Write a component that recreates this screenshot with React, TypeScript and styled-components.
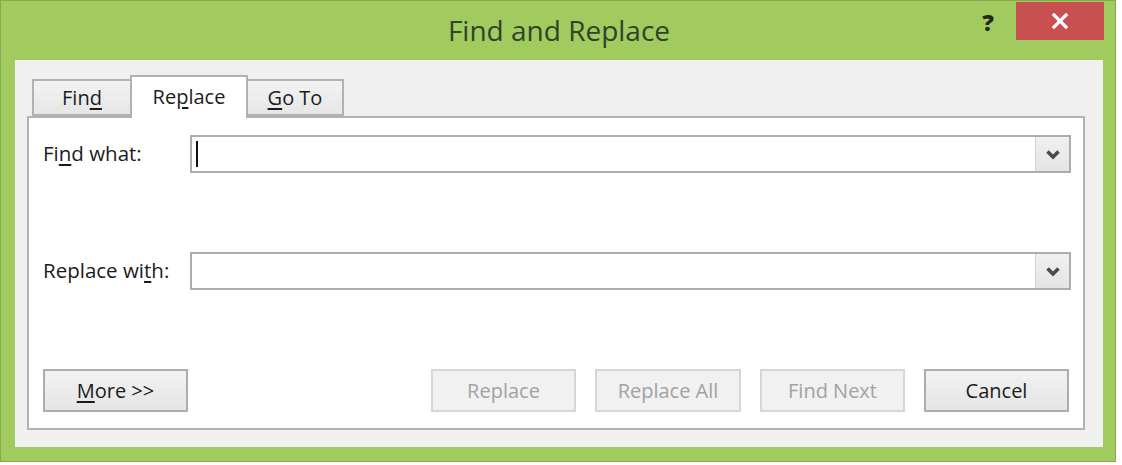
import React from 'react';
import styled, { createGlobalStyle } from 'styled-components';

const GlobalStyle = createGlobalStyle`
  html, body {
    margin: 0;
    padding: 0;
    background: #ffffff;
  }
  body {
    font-family: "Open Sans", "Noto Sans", "DejaVu Sans", sans-serif;
  }
`;

const Window = styled.div`
  box-sizing: border-box;
  width: 1116px;
  height: 462px;
  display: flex;
  flex-direction: column;
  background: #a1cb5f;
  border: 1px solid #86ab4c;
`;

const TitleBar = styled.div`
  height: 59px;
  display: grid;
  grid-template-columns: 1fr auto 1fr;
  align-items: start;
`;

const Title = styled.div`
  grid-column: 2;
  font-size: 28px;
  line-height: 28px;
  margin-top: 15px;
  margin-left: 2px;
  color: #33422a;
`;

const Controls = styled.div`
  grid-column: 3;
  display: flex;
  justify-content: flex-end;
  align-items: flex-start;
  padding-right: 11px;
`;

const HelpButton = styled.div`
  width: 24px;
  margin-top: 7px;
  margin-right: 16px;
  font-family: "Open Sans", sans-serif;
  font-weight: 800;
  font-size: 23px;
  line-height: 28px;
  text-align: center;
  color: #1e2c15;
`;

const CloseButton = styled.div`
  width: 88px;
  height: 38px;
  margin-top: 1px;
  background: #c85050;
  display: flex;
  align-items: center;
  justify-content: center;
`;

const Client = styled.div`
  flex: 1;
  margin: 0 12px 14px 14px;
  background: #f0f0f0;
  padding: 15px 18px 17px 12px;
  display: flex;
  flex-direction: column;
`;

const TabStrip = styled.div`
  display: flex;
  align-items: flex-end;
  height: 41px;
  padding-left: 5px;
`;

const Tab = styled.div<{ active?: boolean; w: number }>`
  position: relative;
  z-index: ${p => (p.active ? 2 : 1)};
  box-sizing: border-box;
  height: ${p => (p.active ? '43px' : '37px')};
  margin-bottom: ${p => (p.active ? '-2px' : '0')};
  margin-left: -2px;
  width: ${p => p.w}px;
  display: flex;
  justify-content: center;
  align-items: ${p => (p.active ? 'flex-start' : 'center')};
  padding-top: ${p => (p.active ? '7px' : '0')};
  border: 2px solid #b2b2b2;
  border-bottom: ${p => (p.active ? 'none' : '2px solid #b2b2b2')};
  background: ${p => (p.active ? '#ffffff' : 'linear-gradient(#f3f3f3, #e6e6e6)')};
  font-size: 20px;
  line-height: 26px;
  color: #1b1b1b;

  &:first-child {
    margin-left: 0;
  }
`;

const Panel = styled.div`
  flex: 1;
  background: #ffffff;
  border: 2px solid #b2b2b2;
  padding: 17px 12px 16px 14px;
  display: flex;
  flex-direction: column;
  gap: 79px;
`;

const FieldRow = styled.div`
  display: grid;
  grid-template-columns: 147px 1fr;
  align-items: center;
`;

const Label = styled.div`
  font-size: 20.5px;
  line-height: 26px;
  margin-top: -3px;
  color: #1b1b1b;
`;

const Combo = styled.div`
  box-sizing: border-box;
  height: 38px;
  display: flex;
  border: 2px solid #acacac;
  background: #ffffff;
`;

const ComboText = styled.div`
  flex: 1;
  display: flex;
  align-items: center;
  padding-left: 4px;
`;

const Caret = styled.span`
  display: block;
  width: 2px;
  height: 26px;
  background: #111111;
`;

const ComboArrow = styled.div`
  width: 33px;
  display: flex;
  align-items: center;
  justify-content: center;
  background: linear-gradient(#f0f0f0, #e4e4e4);
  border-left: 1px solid #d4d4d4;
`;

const ButtonRow = styled.div`
  display: flex;
  justify-content: space-between;
  padding-right: 2px;
`;

const ButtonGroup = styled.div`
  display: flex;
  gap: 19px;
`;

const Button = styled.div<{ disabled?: boolean; w?: number }>`
  box-sizing: border-box;
  width: ${p => p.w ?? 145}px;
  height: 43px;
  display: flex;
  align-items: center;
  justify-content: center;
  font-size: 20px;
  line-height: 26px;
  border: 2px solid ${p => (p.disabled ? '#d6d6d6' : '#adadad')};
  background: ${p => (p.disabled ? '#f1f1f1' : 'linear-gradient(#f2f2f2, #e5e5e5)')};
  color: ${p => (p.disabled ? '#a2a2a2' : '#1b1b1b')};
`;

const Key = styled.u`
  text-underline-offset: 3px;
  text-decoration-thickness: 2px;
`;

const Chevron = () => (
  <svg width="16" height="11" viewBox="0 0 16 11">
    <path d="M2.5 2.5 L8 8 L13.5 2.5" fill="none" stroke="#4b4b4b" strokeWidth="3.6" />
  </svg>
);

const CloseGlyph = () => (
  <svg width="18" height="16" viewBox="0 0 18 16">
    <path d="M3 2 L15 14 M15 2 L3 14" stroke="#ffffff" strokeWidth="3.2" strokeLinecap="square" />
  </svg>
);

const App: React.FC = () => (
  <>
    <GlobalStyle />
    <Window>
      <TitleBar>
        <Title>Find and Replace</Title>
        <Controls>
          <HelpButton>?</HelpButton>
          <CloseButton>
            <CloseGlyph />
          </CloseButton>
        </Controls>
      </TitleBar>

      <Client>
        <TabStrip>
          <Tab w={100}>
            <span>Fin<Key>d</Key></span>
          </Tab>
          <Tab active w={118}>
            <span>Re<Key>p</Key>lace</span>
          </Tab>
          <Tab w={98}>
            <span><Key>G</Key>o To</span>
          </Tab>
        </TabStrip>

        <Panel>
          <FieldRow>
            <Label>Fi<Key>n</Key>d what:</Label>
            <Combo>
              <ComboText>
                <Caret />
              </ComboText>
              <ComboArrow>
                <Chevron />
              </ComboArrow>
            </Combo>
          </FieldRow>

          <FieldRow>
            <Label>Replace wi<Key>t</Key>h:</Label>
            <Combo>
              <ComboText />
              <ComboArrow>
                <Chevron />
              </ComboArrow>
            </Combo>
          </FieldRow>

          <ButtonRow>
            <Button>
              <span><Key>M</Key>ore &gt;&gt;</span>
            </Button>
            <ButtonGroup>
              <Button disabled>Replace</Button>
              <Button disabled w={146}>Replace All</Button>
              <Button disabled>Find Next</Button>
              <Button>Cancel</Button>
            </ButtonGroup>
          </ButtonRow>
        </Panel>
      </Client>
    </Window>
  </>
);

export default App;
